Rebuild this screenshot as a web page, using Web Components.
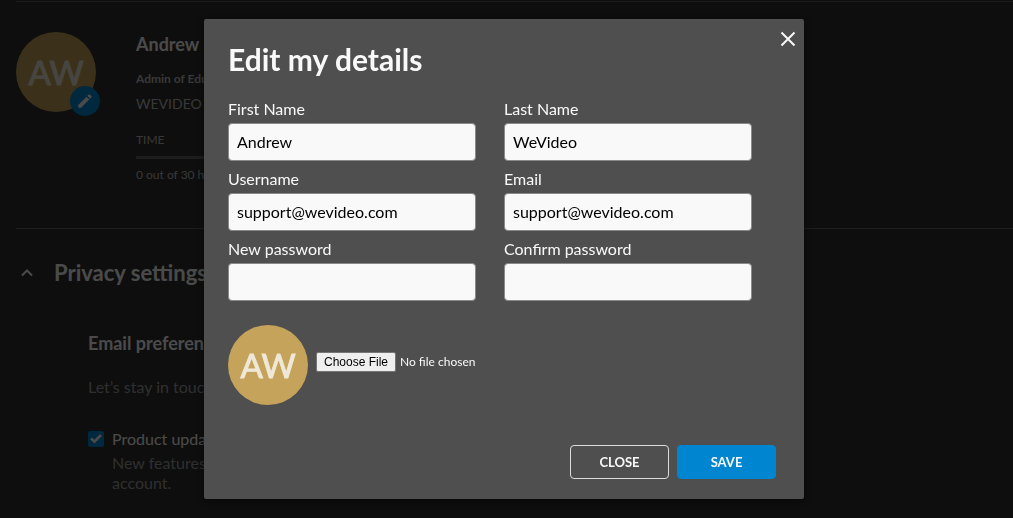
<!DOCTYPE html>
<html lang="en">
<head>
<meta charset="utf-8">
<meta name="viewport" content="width=device-width, initial-scale=1">
<title>Account settings</title>
<style>
  html { background: #2f2f2f; }
  body { margin: 0; font: 16px/20px Lato, "Open Sans", sans-serif; color: #f9f9f9; overflow: hidden; }
</style>
</head>
<body>
<account-page></account-page>
<modal-dialog heading="Edit my details">
  <details-form></details-form>
</modal-dialog>

<script>
function define(name, markup, setup) {
  const template = document.createElement('template');
  template.innerHTML = '<style>*{box-sizing:border-box}</style>' + markup;
  customElements.define(name, class extends HTMLElement {
    connectedCallback() {
      if (this.shadowRoot) return;
      const root = this.attachShadow({ mode: 'open', delegatesFocus: name === 'text-field' });
      root.append(template.content.cloneNode(true));
      if (setup) setup(this, root);
    }
  });
}

define('user-avatar', `
<style>
  :host { display: grid; place-items: center; width: 80px; height: 80px; flex: none;
    border-radius: 50%; background: #c5a35a; color: #efe8d8; font-size: 33px; line-height: 40px; -webkit-text-stroke: 1px #efe8d8; position: relative; }
  ::slotted(button) { position: absolute; right: -4px; bottom: -4px; }
</style>
<span></span><slot></slot>`, (host, root) => {
  root.querySelector('span').textContent = host.getAttribute('initials');
});

define('profile-summary', `
<style>
  :host { display: flex; gap: 40px; margin: 0 0 0 16px; padding: 30px 0 44px; border: solid #616161; border-width: 1px 0; }
  .edit { width: 30px; height: 30px; padding: 0; border: 0; border-radius: 50%; background: #0086d1; display: grid; place-items: center; }
  .edit svg { width: 18px; height: 18px; fill: #f9f9f9; }
  .info { flex: 1; font-size: 12px; line-height: 16px; }
  h2 { font-size: 18px; line-height: 24px; margin: 0; }
  p { margin: 0; color: #bdbdbd; }
  .role { margin-top: 15px; font-weight: 700; }
  .org { margin-top: 7px; font-size: 14px; line-height: 20px; }
  .label { margin-top: 18px; }
  .bar { height: 3px; margin: 8px 0; background: #616161; max-width: 400px; }
  .usage { padding-bottom: 1px; }
</style>
<user-avatar initials="AW"><button class="edit" type="button" aria-label="Change picture">
  <svg viewBox="0 0 24 24"><path d="M3 17.25V21h3.75L17.81 9.94l-3.75-3.75L3 17.25zM20.71 7.04a1 1 0 0 0 0-1.41l-2.34-2.34a1 1 0 0 0-1.41 0l-1.83 1.83 3.75 3.75 1.83-1.83z"/></svg>
</button></user-avatar>
<div class="info">
  <h2>Andrew</h2>
  <p class="role">Admin of Education</p>
  <p class="org">WEVIDEO</p>
  <p class="label">TIME</p>
  <div class="bar"></div>
  <p class="usage">0 out of 30 hours</p>
</div>`);

define('check-option', `
<style>
  :host { display: grid; grid-template-columns: 16px 200px; column-gap: 8px; }
  input { appearance: none; width: 16px; height: 16px; margin: 2px 0 0; border-radius: 2px; background: #0086d1; display: grid; place-items: center; }
  input::before { content: ""; width: 12px; height: 10px; background: #f9f9f9;
    clip-path: polygon(0 52%, 17% 34%, 36% 57%, 83% 2%, 100% 19%, 37% 96%); }
  input:not(:checked)::before { background: none; }
  p { grid-column: 2; margin: 4px 0 0; color: #9e9e9e; }
</style>
<input id="box" type="checkbox" checked><label for="box"></label><p><slot></slot></p>`, (host, root) => {
  root.querySelector('label').textContent = host.getAttribute('label');
});

define('privacy-section', `
<style>
  :host { display: block; padding: 28px 16px 0; }
  header { display: flex; align-items: center; gap: 16px; }
  header button { width: 22px; height: 22px; border: 0; padding: 0; background: none; }
  header svg { display: block; width: 22px; height: 22px; fill: none; stroke: #f9f9f9; stroke-width: 2; }
  h2 { font-size: 22px; line-height: 32px; margin: 0; }
  .body { padding: 42px 0 0 72px; }
  h3 { font-size: 18px; line-height: 24px; margin: 0; }
  p { margin: 22px 0 32px; color: #9e9e9e; }
</style>
<header><button type="button" aria-label="Collapse"><svg viewBox="0 0 22 22"><path d="M6 13.5l5-5 5 5"/></svg></button><h2>Privacy settings</h2></header>
<div class="body">
  <h3>Email preferences</h3>
  <p>Let’s stay in touch</p>
  <check-option label="Product updates">New features added to your account.</check-option>
</div>`);

define('account-page', `
<style>:host { display: block; padding-top: 1px; }</style>
<profile-summary></profile-summary>
<privacy-section></privacy-section>`);

define('modal-dialog', `
<style>
  :host { position: fixed; inset: 0; display: grid; place-items: center; padding-right: 5px; background: rgba(0,0,0,.7); }
  section { position: relative; width: min(600px, 100%); padding: 22px 28px 20px 24px; border-radius: 2px; background: #4f4f4f; box-shadow: 0 2px 8px rgba(0,0,0,.5); }
  h1 { font-size: 30px; line-height: 36px; margin: 0 0 22px; }
  .x { position: absolute; top: 8px; right: 4px; width: 24px; height: 24px; border: 0; padding: 0; background: none; }
  svg { display: block; width: 24px; height: 24px; stroke: #f9f9f9; stroke-width: 2; }
</style>
<section role="dialog" aria-modal="true" aria-labelledby="title">
  <h1 id="title"></h1>
  <button class="x" type="button" aria-label="Dismiss"><svg viewBox="0 0 24 24"><path d="M5.5 5.5l13 13M18.5 5.5l-13 13"/></svg></button>
  <slot></slot>
</section>`, (host, root) => {
  root.querySelector('h1').textContent = host.getAttribute('heading');
});

define('text-field', `
<style>
  :host { display: block; }
  label { display: block; line-height: 20px; margin-bottom: 4px; }
  input { display: block; width: 100%; height: 38px; padding: 0 8px 2px; border: 1px solid #8a8a8a; border-radius: 4px;
    background: #f9f9f9; color: #000; font: inherit; }
</style>
<label for="field"></label><input id="field">`, (host, root) => {
  const input = root.querySelector('input');
  root.querySelector('label').textContent = host.getAttribute('label');
  input.type = host.getAttribute('type') || 'text';
  input.value = host.getAttribute('value') || '';
});

define('action-button', `
<style>
  :host { display: block; }
  button { display: block; width: 99px; height: 34px; padding: 0; border: 1px solid #dcdcdc; border-radius: 4px; background: none;
    color: #f9f9f9; font: 700 13px/20px Lato, sans-serif; }
  :host([primary]) button { background: #0086d1; border-color: #0086d1; }
</style>
<button type="button"><slot></slot></button>`);

define('details-form', `
<style>
  :host { display: block; }
  .fields { display: grid; grid-template-columns: 1fr 1fr; gap: 8px 28px; margin-right: 24px; }
  .picture { display: flex; align-items: center; gap: 8px; margin-top: 24px; }
  input { font: 12px/16px Lato, sans-serif; color: #f9f9f9; width: 240px; height: 22px; margin-bottom: 4px; }
  input::file-selector-button { font: 12px/16px "Liberation Sans", Arial, sans-serif; color: #000; height: 20px; width: 80px;
    padding: 0; margin-right: 4px; border: 1px solid #767676; border-radius: 2px; background: #efefef; box-sizing: border-box; }
  footer { display: flex; justify-content: flex-end; gap: 8px; margin-top: 40px; }
</style>
<div class="fields">
  <text-field label="First Name" value="Andrew"></text-field>
  <text-field label="Last Name" value="WeVideo"></text-field>
  <text-field label="Username" value="support@wevideo.com"></text-field>
  <text-field label="Email" value="support@wevideo.com"></text-field>
  <text-field label="New password" type="password"></text-field>
  <text-field label="Confirm password" type="password"></text-field>
</div>
<div class="picture"><user-avatar initials="AW"></user-avatar><input type="file" accept="image/*" aria-label="Profile picture"></div>
<footer><action-button>CLOSE</action-button><action-button primary>SAVE</action-button></footer>`);
</script>
</body>
</html>
